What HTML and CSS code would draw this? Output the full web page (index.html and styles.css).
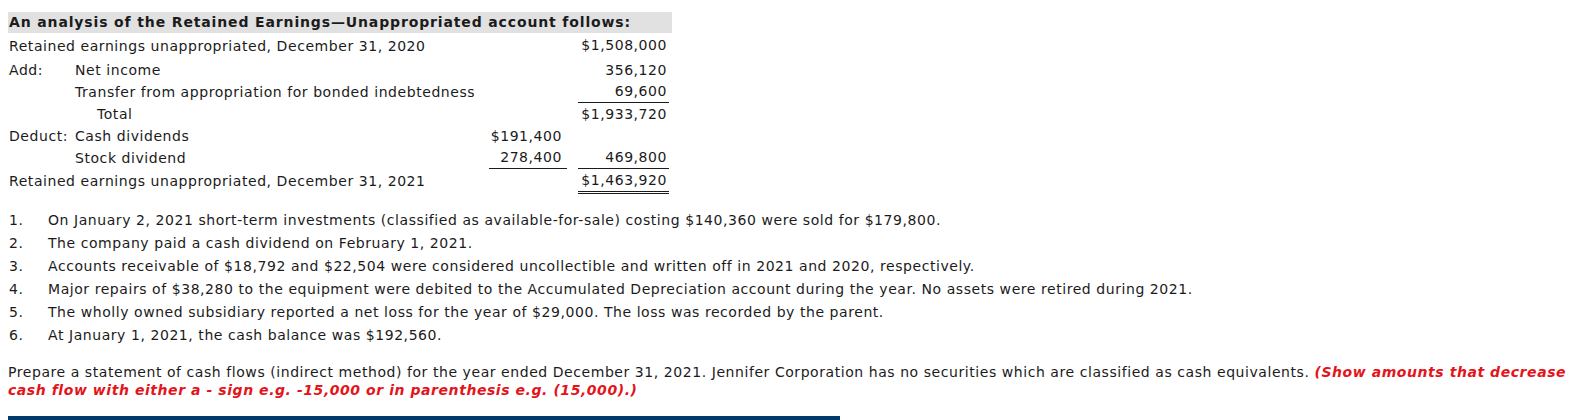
FILE: index.html
```html
<!DOCTYPE html>
<html>
<head>
<meta charset="utf-8">
<link rel="stylesheet" href="styles.css">
</head>
<body>
<table class="analysis">
  <colgroup>
    <col class="c-label">
    <col class="c-desc">
    <col class="c-amt1">
    <col class="c-amt2">
  </colgroup>
  <tr class="head"><th colspan="4">An analysis of the Retained Earnings—Unappropriated account follows:</th></tr>
  <tr class="first"><td colspan="2">Retained earnings unappropriated, December 31, 2020</td><td></td><td><div class="amt a2">$1,508,000</div></td></tr>
  <tr><td>Add:</td><td>Net income</td><td></td><td><div class="amt a2">356,120</div></td></tr>
  <tr><td></td><td>Transfer from appropriation for bonded indebtedness</td><td></td><td><div class="amt a2 ul">69,600</div></td></tr>
  <tr><td></td><td class="indent">Total</td><td></td><td><div class="amt a2">$1,933,720</div></td></tr>
  <tr><td>Deduct:</td><td>Cash dividends</td><td><div class="amt a1">$191,400</div></td><td></td></tr>
  <tr><td></td><td>Stock dividend</td><td><div class="amt a1 ul">278,400</div></td><td><div class="amt a2 ul">469,800</div></td></tr>
  <tr class="last"><td colspan="2">Retained earnings unappropriated, December 31, 2021</td><td></td><td><div class="amt a2 dbl">$1,463,920</div></td></tr>
</table>

<ol class="notes">
  <li><span class="num">1.</span><span>On January 2, 2021 short-term investments (classified as available-for-sale) costing $140,360 were sold for $179,800.</span></li>
  <li><span class="num">2.</span><span>The company paid a cash dividend on February 1, 2021.</span></li>
  <li><span class="num">3.</span><span>Accounts receivable of $18,792 and $22,504 were considered uncollectible and written off in 2021 and 2020, respectively.</span></li>
  <li><span class="num">4.</span><span>Major repairs of $38,280 to the equipment were debited to the Accumulated Depreciation account during the year. No assets were retired during 2021.</span></li>
  <li><span class="num">5.</span><span>The wholly owned subsidiary reported a net loss for the year of $29,000. The loss was recorded by the parent.</span></li>
  <li><span class="num">6.</span><span>At January 1, 2021, the cash balance was $192,560.</span></li>
</ol>

<p class="instr">Prepare a statement of cash flows (indirect method) for the year ended December 31, 2021. Jennifer Corporation has no securities which are classified as cash equivalents. <em class="warn">(Show amounts that decrease cash flow with either a - sign e.g. -15,000 or in parenthesis e.g. (15,000).)</em></p>

<div class="navbar"></div>
</body>
</html>
```

FILE: styles.css
```css
html, body {
  margin: 0;
  padding: 0;
  background: #fff;
}
body {
  padding: 12px 8px 0 8px;
  font-family: "DejaVu Sans", Verdana, sans-serif;
  font-size: 14px;
  letter-spacing: 0.56px;
  color: #1b1b1b;
  overflow: hidden;
  height: 420px;
  box-sizing: border-box;
}
.analysis {
  border-collapse: collapse;
  table-layout: fixed;
  width: 664px;
}
.c-label { width: 66px; }
.c-desc { width: 404px; }
.c-amt1 { width: 89px; }
.c-amt2 { width: 105px; }
.analysis th,
.analysis td {
  padding: 0 0 0 1px;
  height: 22px;
  line-height: 22px;
  text-align: left;
  white-space: nowrap;
  vertical-align: middle;
}
.analysis .head th {
  background: #e1e1e1;
  font-weight: bold;
  letter-spacing: 0.86px;
  height: 21px;
  line-height: 21px;
}
.analysis tr.first td {
  height: 24px;
  padding-top: 2px;
  vertical-align: top;
}
.analysis td.indent {
  padding-left: 23px;
}
.amt {
  text-align: right;
  line-height: 21px;
}
.a1 {
  margin-left: 10px;
  padding-right: 5px;
}
.a2 {
  margin-left: 10px;
  margin-right: 3px;
  padding-right: 2px;
}
.ul {
  border-bottom: 1px solid #1b1b1b;
}
.analysis tr.last td {
  height: 23px;
  vertical-align: top;
  padding-top: 1px;
}
.dbl {
  border-bottom: 3px double #1b1b1b;
}
.notes {
  list-style: none;
  margin: 15px 0 0 0;
  padding: 0;
}
.notes li {
  display: flex;
  line-height: 23px;
}
.notes .num {
  width: 39px;
  padding-left: 1px;
  flex: none;
}
.instr {
  margin: 16px 0 0 0;
  line-height: 18px;
}
.warn {
  color: #e4141b;
  font-weight: bold;
  font-style: italic;
}
.navbar {
  margin-top: 17px;
  width: 832px;
  height: 10px;
  background: #013a6b;
}
```
